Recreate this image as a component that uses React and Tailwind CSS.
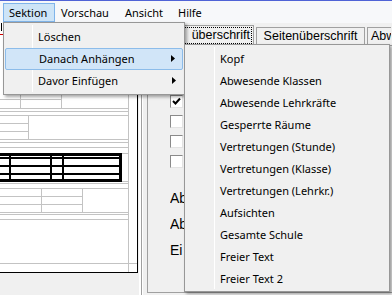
import React from "react";

const MENU_FONT = { fontFamily: '"Noto Sans", "Liberation Sans", sans-serif' };
const FORM_FONT = { fontFamily: '"Liberation Sans", Arial, sans-serif' };

const subItems = [
  "Kopf",
  "Abwesende Klassen",
  "Abwesende Lehrkräfte",
  "Gesperrte Räume",
  "Vertretungen (Stunde)",
  "Vertretungen (Klasse)",
  "Vertretungen (Lehrkr.)",
  "Aufsichten",
  "Gesamte Schule",
  "Freier Text",
  "Freier Text 2",
];

// thin grey / black lines of the print preview page
function PagePreview() {
  const g = "#c3c3c3";
  const h = (y, x1, x2, c = g, w = 1) => <rect key={`h${y}-${x1}-${w}`} x={x1} y={y} width={x2 - x1} height={w} fill={c} />;
  const v = (x, y1, y2, c = g, w = 1) => <rect key={`v${x}-${y1}-${w}`} x={x} y={y1} width={w} height={y2 - y1} fill={c} />;
  return (
    <svg width="137" height="249" viewBox="0 23 137 249" shapeRendering="crispEdges">
      {v(1, 23, 31, "#000")}
      {h(34, 0, 3, "#d00000")}
      {v(20, 60, 108)}
      {v(61, 60, 108)}
      {h(99, 0, 61)}
      {h(108, 0, 129)}
      {h(111, 0, 129)}
      {h(115, 0, 129)}
      {v(28, 115, 139)}
      {h(123, 0, 28)}
      {h(131, 0, 28)}
      {h(139, 0, 129)}
      {h(142, 0, 129)}
      {h(147, 0, 129)}
      {h(153, 121, 129)}
      {h(181, 121, 129)}
      {/* bold table */}
      {h(153, 0, 122, "#000", 3)}
      {h(179, 0, 122, "#000", 3)}
      {v(119, 153, 182, "#000", 3)}
      {h(157, 0, 120, "#000", 2)}
      {h(165, 0, 120, "#000", 2)}
      {h(173, 0, 120, "#000", 2)}
      {v(9, 155, 180, "#000", 2)}
      {v(50, 155, 180, "#000", 2)}
      {v(62, 155, 180, "#000", 2)}
      {h(183, 0, 129)}
      {h(188, 0, 129)}
      {v(41, 188, 212)}
      {v(82, 188, 212)}
      {h(196, 0, 82)}
      {h(204, 0, 82)}
      {h(212, 0, 129)}
      {h(214, 0, 129)}
      {h(219, 0, 129)}
      {h(263, 0, 137)}
      {v(128, 23, 272)}
    </svg>
  );
}

function Arrow({ top = 7, right = 8 }) {
  return (
    <svg width="4" height="7" viewBox="0 0 4 7" className="absolute" style={{ top, right }}>
      <path d="M0 0 L4 3.5 L0 7 Z" fill="#000" />
    </svg>
  );
}

function Checkbox({ checked }) {
  return (
    <div className="w-[13px] h-[13px] border-t border-l border-[#8a8a8a] border-b border-r border-b-[#e3e3e3] border-r-[#e3e3e3] bg-white flex items-center justify-center">
      {checked && (
        <svg width="9" height="9" viewBox="0 0 9 9">
          <path d="M1 4 L3.5 6.5 L8 1.5" stroke="#000" strokeWidth="2" fill="none" />
        </svg>
      )}
    </div>
  );
}

export default function App() {
  return (
    <div className="relative w-[392px] h-[295px] overflow-hidden bg-[#f0f0f0]">
      <div className="h-px bg-[#5063d6]" />

      {/* menu bar */}
      <div className="h-[22px] bg-[#f7f8fa] flex items-start pl-[3px] pt-[2px] text-[11px] text-black" style={MENU_FONT}>
        <div className="w-[52px] h-[19px] border border-[#7fb4ea] bg-[#cde4f7] pl-[5px] leading-[17px]">Sektion</div>
        <div className="w-[64px] h-[19px] pl-[6px] leading-[19px]">Vorschau</div>
        <div className="w-[53px] h-[19px] pl-[6px] leading-[19px]">Ansicht</div>
        <div className="w-[40px] h-[19px] pl-[6px] leading-[19px]">Hilfe</div>
      </div>

      {/* body */}
      <div className="flex h-[272px]">
        <div className="w-[138px] flex flex-col">
          <div className="h-[250px] bg-white border-r border-b border-black">
            <PagePreview />
          </div>
        </div>
        {/* splitter */}
        <div className="w-[9px] flex">
          <div className="w-px" />
          <div className="w-[2px] bg-white" />
          <div className="w-px bg-[#a0a0a0]" />
          <div className="w-px bg-white" />
        </div>

        {/* tab control */}
        <div className="flex-1 flex flex-col" style={FORM_FONT}>
          <div className="h-[22px] flex items-end text-[12.5px] text-black">
            <div className="w-[107px] h-[21px] mb-[-1px] bg-[#f0f0f0] border border-b-0 border-[#a0a0a0] flex justify-end items-start pt-[1px] pr-[1px]">
              <div className="w-[68px] h-[17px] border border-dotted border-black overflow-hidden flex justify-end pr-[1px]">
                <span className="leading-[15px] whitespace-nowrap">überschrift</span>
              </div>
            </div>
            <div className="ml-[2px] w-[109px] h-[18px] border border-b-0 border-[#a0a0a0] flex items-center justify-center leading-none whitespace-nowrap">
              Seitenüberschrift
            </div>
            <div className="ml-[2px] w-[24px] h-[18px] border border-b-0 border-r-0 border-[#a0a0a0] pl-[3px] leading-[16px] whitespace-nowrap overflow-hidden">
              Abw
            </div>
          </div>
          <div className="h-[248px] border-l border-t border-b border-[#a0a0a0] pl-[22px] pt-[49px]">
            <div className="flex flex-col gap-[7px]">
              {[true, false, false, false].map((c, i) => (
                <Checkbox key={i} checked={c} />
              ))}
            </div>
            <div className="mt-[17px] w-[15px] overflow-hidden flex flex-col text-[14px] text-black leading-[26px] whitespace-nowrap">
              <span>Ab</span>
              <span>Ab</span>
              <span>Ei</span>
            </div>
          </div>
        </div>
      </div>

      {/* Sektion dropdown */}
      <div
        className="absolute z-20 left-[3px] top-[22px] w-[182px] bg-[#f0f0f0] border border-[#979797] pt-[3px] pb-[2px] shadow-[2px_2px_3px_rgba(0,0,0,0.35)] text-[11px] text-black"
        style={MENU_FONT}
      >
        <div className="absolute left-[28px] top-[2px] bottom-[2px] w-px bg-[#e2e3e3] border-r border-white" />
        <div className="relative h-[22px] pl-[34px] leading-[22px]">Löschen</div>
        <div className="relative h-[22px] mx-[1px] pl-[33px] leading-[20px] border border-[#8cbcea] bg-[#d1e5f8] rounded-[2px]">
          Danach Anhängen
          <Arrow top={6} right={7} />
        </div>
        <div className="relative h-[22px] pl-[34px] leading-[22px]">
          Davor Einfügen
          <Arrow />
        </div>
      </div>

      {/* submenu */}
      <div
        className="absolute z-30 left-[184px] top-[44px] w-[206px] bg-[#f0f0f0] border border-[#979797] pt-[3px] pb-[1px] shadow-[2px_2px_3px_rgba(0,0,0,0.35)] text-[11px] text-black"
        style={MENU_FONT}
      >
        <div className="absolute left-[29px] top-[2px] bottom-[2px] w-px bg-[#e2e3e3] border-r border-white" />
        {subItems.map((t) => (
          <div key={t} className="relative h-[22px] pl-[35px] leading-[22px] whitespace-nowrap">
            {t}
          </div>
        ))}
      </div>
    </div>
  );
}
